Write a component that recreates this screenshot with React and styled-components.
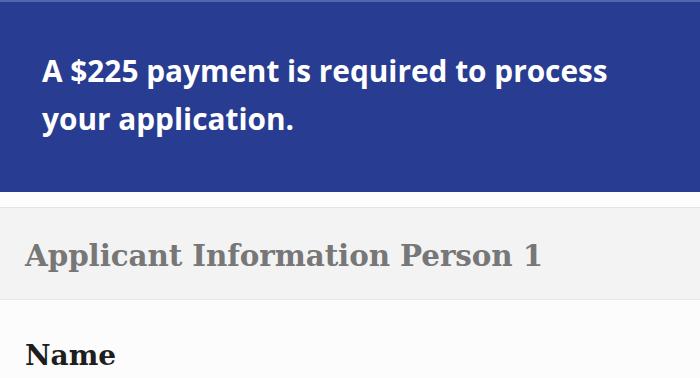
import React from "react";
import styled, { createGlobalStyle } from "styled-components";

const Global = createGlobalStyle`
  html, body { margin: 0; padding: 0; background: #fcfcfc; }
  body { width: 700px; height: 378px; overflow: hidden; }
`;

const Page = styled.div`
  display: flex;
  flex-direction: column;
  width: 700px;
`;

const Banner = styled.div`
  background: #283d91;
  border-top: 2px solid #5265ad;
  height: 190px;
  box-sizing: content-box;
  padding: 0 42px;
  display: flex;
  align-items: center;
`;

const BannerText = styled.p`
  margin: 0;
  max-width: 610px;
  color: #ffffff;
  font-family: "Open Sans", sans-serif;
  font-weight: 700;
  font-size: 29.8px;
  line-height: 48px;
  padding-bottom: 4px;
`;

const Spacer = styled.div`
  height: 15px;
  background: #fdfdfd;
  border-bottom: 1px solid #e4e4e4;
`;

const SectionHeader = styled.div`
  background: #f3f3f3;
  height: 91px;
  border-bottom: 1px solid #e6e6e6;
  padding: 0 25px;
  display: flex;
  align-items: center;
`;

const SectionTitle = styled.h2`
  margin: 0;
  color: #777777;
  font-family: "DejaVu Serif", Georgia, serif;
  font-weight: 700;
  font-size: 29.4px;
  letter-spacing: -0.1px;
  padding-top: 3px;
`;

const Body = styled.div`
  background: #fcfcfc;
  padding: 39px 25px 0;
`;

const FieldLabel = styled.h3`
  margin: 0;
  color: #1e1e1e;
  font-family: "DejaVu Serif", Georgia, serif;
  font-weight: 700;
  font-size: 28px;
`;

export default function App() {
  return (
    <>
      <Global />
      <Page>
        <Banner>
          <BannerText>
            A $225 payment is required to process your application.
          </BannerText>
        </Banner>
        <Spacer />
        <SectionHeader>
          <SectionTitle>Applicant Information Person 1</SectionTitle>
        </SectionHeader>
        <Body>
          <FieldLabel>Name</FieldLabel>
        </Body>
      </Page>
    </>
  );
}
